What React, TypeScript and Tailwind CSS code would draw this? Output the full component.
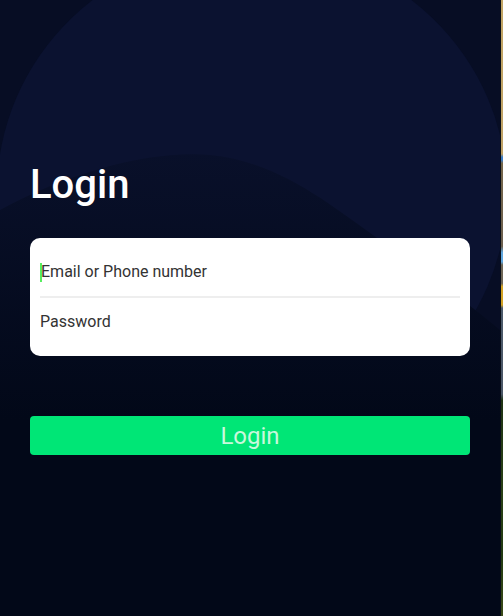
import React from 'react';

// Background waves for the login panel
const Backdrop = () => (
  <svg
    className="absolute inset-0 h-full w-full"
    viewBox="0 0 500 616"
    preserveAspectRatio="none"
  >
    <defs>
      <linearGradient id="hill" x1="0" y1="150" x2="0" y2="420" gradientUnits="userSpaceOnUse">
        <stop offset="0" stopColor="#09102a" />
        <stop offset="1" stopColor="#020818" />
      </linearGradient>
    </defs>
    <rect width="500" height="616" fill="#020818" />
    <ellipse cx="252" cy="170" rx="330" ry="300" fill="#070d24" />
    <ellipse cx="252" cy="192" rx="255" ry="246" fill="#0b1230" />
    <path
      d="M0,210 C70,172 150,150 210,155 C280,162 330,205 380,240 C430,275 470,305 500,330 L500,616 L0,616 Z"
      fill="url(#hill)"
    />
  </svg>
);

const App = () => {
  return (
    <div className="flex h-[616px] w-[503px] overflow-hidden bg-[#020818] font-['Roboto',sans-serif]">
      <div className="relative w-[500px] shrink-0">
        <Backdrop />
        <div className="relative flex flex-col px-[30px] pt-[165px]">
          <h1 className="text-[40px] font-medium leading-none text-white">Login</h1>

          <div className="mt-[33px] rounded-[10px] bg-white p-[10px]">
            <div className="flex h-[48px] items-center text-[16px] text-[#333333]">
              <span className="-mr-px h-[19px] w-[2px] bg-[#57ee60]" />
              <span>Email or Phone number</span>
            </div>
            <div className="h-[2px] bg-[#eeeeee]" />
            <div className="flex h-[48px] items-center text-[16px] text-[#333333]">
              Password
            </div>
          </div>

          <button className="mt-[60px] flex h-[39px] items-center justify-center rounded-[4px] bg-[#00e676] text-[24px] text-[#c8f8dc]">
            Login
          </button>
        </div>
      </div>
      <div className="w-px bg-[#0a0f1a]" />
      <div className="flex-1 bg-[linear-gradient(to_bottom,#c2a564_0%,#bfa266_25%,#3c7cc2_25.5%,#3c7cc2_26%,#75664a_26.5%,#6b5f4e_40%,#5fa6de_41%,#5fa6de_42.5%,#6e6656_43%,#6e6656_46%,#d2a224_46.5%,#d2a224_49.5%,#4c5a6a_50%,#4a5666_64%,#1f3414_65%,#2a4016_80%,#223a12_90%,#3a4a18_100%)]" />
    </div>
  );
};

export default App;
